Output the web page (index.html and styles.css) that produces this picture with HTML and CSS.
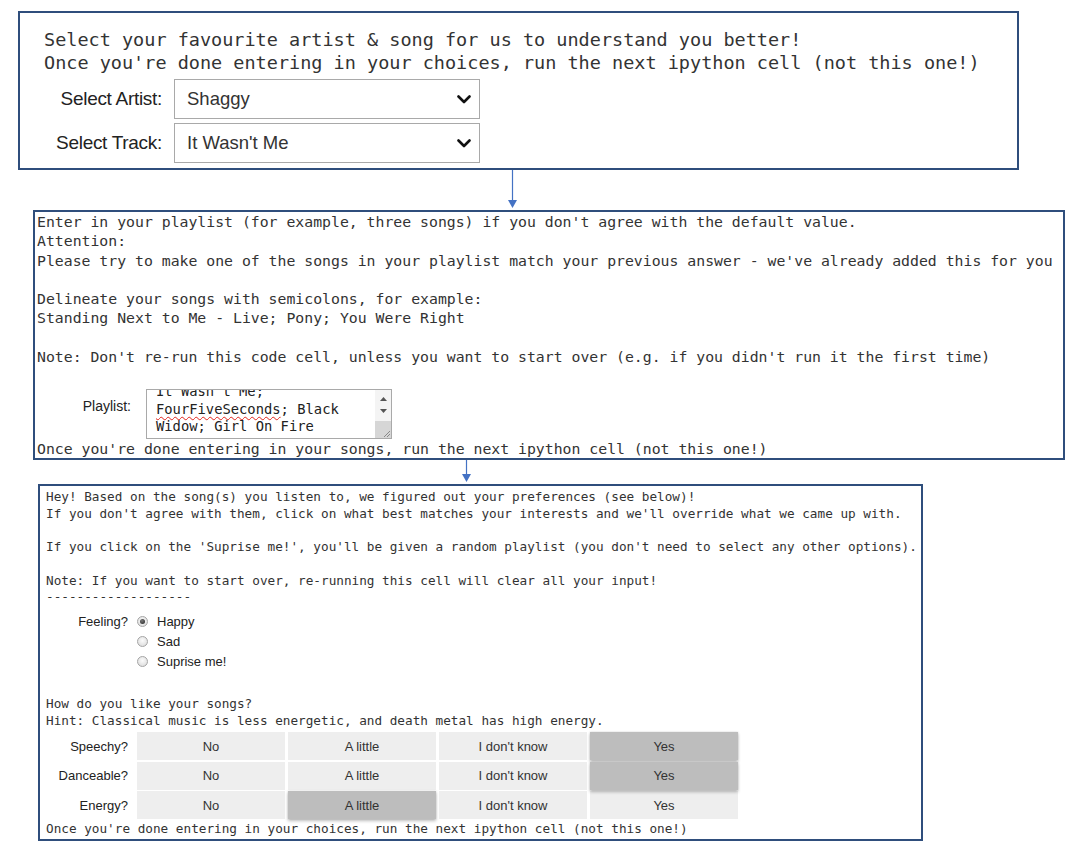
FILE: index.html
```html
<!DOCTYPE html>
<html lang="en">
<head>
<meta charset="utf-8">
<title>Music preferences</title>
<link rel="stylesheet" href="styles.css">
</head>
<body>
<div class="page">

  <section class="cell cell-select">
    <div class="out out-lg">Select your favourite artist &amp; song for us to understand you better!
Once you're done entering in your choices, run the next ipython cell (not this one!)</div>
    <div class="select-rows">
      <div class="select-row">
        <span class="sel-label">Select Artist:</span>
        <div class="select" role="combobox"><span>Shaggy</span>
          <svg class="chev" width="14" height="9" viewBox="0 0 14 9"><polyline points="1.5,1.5 7,7 12.5,1.5" fill="none" stroke="#111" stroke-width="2.6" stroke-linecap="round" stroke-linejoin="round"/></svg>
        </div>
      </div>
      <div class="select-row">
        <span class="sel-label">Select Track:</span>
        <div class="select" role="combobox"><span>It Wasn't Me</span>
          <svg class="chev" width="14" height="9" viewBox="0 0 14 9"><polyline points="1.5,1.5 7,7 12.5,1.5" fill="none" stroke="#111" stroke-width="2.6" stroke-linecap="round" stroke-linejoin="round"/></svg>
        </div>
      </div>
    </div>
  </section>

  <div class="connector c1">
    <svg width="11" height="40" viewBox="0 0 11 40"><line x1="5.5" y1="0" x2="5.5" y2="32" stroke="#4472c4" stroke-width="1.2"/><polygon points="1,30 10,30 5.5,38" fill="#4472c4"/></svg>
  </div>

  <section class="cell cell-playlist">
    <div class="out out-md">Enter in your playlist (for example, three songs) if you don't agree with the default value.
Attention:
Please try to make one of the songs in your playlist match your previous answer - we've already added this for you

Delineate your songs with semicolons, for example:
Standing Next to Me - Live; Pony; You Were Right

Note: Don't re-run this code cell, unless you want to start over (e.g. if you didn't run it the first time)</div>
    <div class="playlist-row">
      <span class="pl-label">Playlist:</span>
      <div class="textarea">
        <div class="ta-text">It Wasn't Me;
<span class="spell">FourFiveSeconds</span>; Black
Widow; Girl On Fire</div>
        <div class="ta-scroll">
          <span class="sb-btn"><svg width="7" height="4" viewBox="0 0 7 4"><polygon points="0,4 7,4 3.5,0" fill="#555"/></svg></span>
          <span class="sb-btn"><svg width="7" height="4" viewBox="0 0 7 4"><polygon points="0,0 7,0 3.5,4" fill="#555"/></svg></span>
          <span class="sb-thumb"><svg width="10" height="10" viewBox="0 0 10 10"><line x1="9" y1="3" x2="3" y2="9" stroke="#888" stroke-width="1"/><line x1="9" y1="6" x2="6" y2="9" stroke="#888" stroke-width="1"/></svg></span>
        </div>
      </div>
    </div>
    <div class="out out-md">Once you're done entering in your songs, run the next ipython cell (not this one!)</div>
  </section>

  <div class="connector c2">
    <svg width="11" height="24" viewBox="0 0 11 24"><line x1="5.5" y1="0" x2="5.5" y2="16" stroke="#4472c4" stroke-width="1.2"/><polygon points="1,14 10,14 5.5,22" fill="#4472c4"/></svg>
  </div>

  <section class="cell cell-prefs">
    <div class="out out-sm">Hey! Based on the song(s) you listen to, we figured out your preferences (see below)!
If you don't agree with them, click on what best matches your interests and we'll override what we came up with.

If you click on the 'Suprise me!', you'll be given a random playlist (you don't need to select any other options).

Note: If you want to start over, re-running this cell will clear all your input!
-------------------</div>

    <div class="radio-group">
      <span class="w-label">Feeling?</span>
      <div class="radio-list">
        <div class="radio-item"><span class="radio checked"></span>Happy</div>
        <div class="radio-item"><span class="radio"></span>Sad</div>
        <div class="radio-item"><span class="radio"></span>Suprise me!</div>
      </div>
    </div>

    <div class="out out-sm hint">How do you like your songs?
Hint: Classical music is less energetic, and death metal has high energy.</div>

    <div class="toggles">
      <span class="w-label">Speechy?</span>
      <span class="tb">No</span><span class="tb">A little</span><span class="tb">I don't know</span><span class="tb on">Yes</span>
      <span class="w-label">Danceable?</span>
      <span class="tb">No</span><span class="tb">A little</span><span class="tb">I don't know</span><span class="tb on">Yes</span>
      <span class="w-label">Energy?</span>
      <span class="tb">No</span><span class="tb on">A little</span><span class="tb">I don't know</span><span class="tb">Yes</span>
    </div>

    <div class="out out-sm last">Once you're done entering in your choices, run the next ipython cell (not this one!)</div>
  </section>

</div>
</body>
</html>
```

FILE: styles.css
```css
html, body {
  margin: 0;
  padding: 0;
  background: #ffffff;
}

.page {
  display: flex;
  flex-direction: column;
  align-items: flex-start;
  padding-top: 11px;
  color: #222;
}

.cell {
  box-sizing: border-box;
  border: 2px solid #2f4e7c;
  background: #fff;
}

.out {
  font-family: "DejaVu Sans Mono", "Liberation Mono", monospace;
  white-space: pre;
  color: #333;
}

/* ---------- cell 1 ---------- */
.cell-select {
  margin-left: 18px;
  width: 1001px;
  height: 159px;
  padding-top: 15px;
}

.out-lg {
  font-size: 18.5px;
  line-height: 23px;
  padding-left: 24px;
}

.select-rows {
  margin-top: 5px;
  display: flex;
  flex-direction: column;
  gap: 4px;
}

.select-row {
  display: flex;
  align-items: center;
}

.sel-label {
  width: 142px;
  margin-right: 12px;
  text-align: right;
  font-family: "Liberation Sans", Arial, sans-serif;
  font-size: 19px;
  letter-spacing: -0.3px;
  color: #222;
}

.select {
  box-sizing: border-box;
  width: 306px;
  height: 40px;
  border: 1px solid #a9a9a9;
  display: flex;
  align-items: center;
  justify-content: space-between;
  padding: 0 8px 0 12px;
  font-family: "Liberation Sans", Arial, sans-serif;
  font-size: 18.5px;
  color: #333;
  background: #fff;
}

.chev {
  display: block;
}

/* ---------- connectors ---------- */
.connector svg {
  display: block;
}

.c1 {
  height: 40px;
  padding-left: 507px;
}

.c2 {
  height: 24px;
  padding-left: 461px;
}

/* ---------- cell 2 ---------- */
.cell-playlist {
  margin-left: 33px;
  width: 1032px;
  height: 250px;
}

.out-md {
  font-size: 14.8px;
  line-height: 19.3px;
  padding-left: 2px;
}

.playlist-row {
  display: flex;
  align-items: flex-start;
  margin-top: 23px;
}

.pl-label {
  width: 96px;
  margin-right: 15px;
  margin-top: 9px;
  text-align: right;
  font-family: "Liberation Sans", Arial, sans-serif;
  font-size: 14px;
  color: #222;
}

.textarea {
  box-sizing: border-box;
  width: 246px;
  height: 50px;
  border: 1px solid #a9a9a9;
  display: flex;
  overflow: hidden;
  background: #fff;
}

.ta-text {
  flex: 1;
  margin-top: -7px;
  padding-left: 9px;
  font-family: "DejaVu Sans Mono", "Liberation Mono", monospace;
  font-size: 13.8px;
  line-height: 17.5px;
  white-space: pre;
  color: #222;
}

.spell {
  text-decoration: underline wavy #e2231a;
  text-decoration-thickness: 1px;
  text-underline-offset: 2px;
}

.ta-scroll {
  width: 16px;
  display: flex;
  flex-direction: column;
  background: #f4f4f4;
}

.sb-btn {
  height: 12px;
  display: flex;
  align-items: center;
  justify-content: center;
}

.sb-btn:first-child {
  margin-top: 3px;
}

.sb-thumb {
  flex: 1;
  margin-top: 4px;
  background: #d6d6d6;
  display: flex;
  align-items: flex-end;
  justify-content: flex-end;
}

.sb-thumb svg {
  display: block;
}

/* ---------- cell 3 ---------- */
.cell-prefs {
  margin-left: 38px;
  width: 885px;
  height: 357px;
  padding-top: 3px;
}

.out-sm {
  font-size: 12.7px;
  line-height: 16.7px;
  padding-left: 6px;
}

.w-label {
  font-family: "Liberation Sans", Arial, sans-serif;
  font-size: 13px;
  color: #222;
  text-align: right;
}

.radio-group {
  display: flex;
  align-items: flex-start;
  margin-top: 6px;
}

.radio-group .w-label {
  width: 88px;
  margin-right: 9px;
  line-height: 20px;
}

.radio-list {
  display: flex;
  flex-direction: column;
}

.radio-item {
  height: 20px;
  display: flex;
  align-items: center;
  gap: 9px;
  font-family: "Liberation Sans", Arial, sans-serif;
  font-size: 13px;
  color: #222;
}

.radio {
  box-sizing: border-box;
  width: 11px;
  height: 11px;
  border-radius: 50%;
  border: 1px solid #a5a5a5;
  background: radial-gradient(circle at 50% 40%, #fbfbfb 0%, #e2e2e2 70%, #d4d4d4 100%);
  display: flex;
  align-items: center;
  justify-content: center;
}

.radio.checked::after {
  content: "";
  width: 5px;
  height: 5px;
  border-radius: 50%;
  background: radial-gradient(circle at 40% 35%, #777 0%, #333 80%);
}

.hint {
  margin-top: 24px;
}

.toggles {
  margin-top: 3px;
  display: grid;
  grid-template-columns: 94px repeat(4, 148px);
  grid-auto-rows: 28px;
  column-gap: 3px;
  row-gap: 1.5px;
}

.toggles .w-label {
  padding-right: 6px;
  display: flex;
  align-items: center;
  justify-content: flex-end;
}

.tb {
  display: flex;
  align-items: center;
  justify-content: center;
  background: #eeeeee;
  font-family: "Liberation Sans", Arial, sans-serif;
  font-size: 13px;
  color: #333;
}

.tb.on {
  background: #bdbdbd;
  box-shadow: 0 2px 3px rgba(0, 0, 0, 0.25), 0 0 2px rgba(0, 0, 0, 0.15);
  position: relative;
  z-index: 1;
}

.last {
  margin-top: 2px;
}
```
